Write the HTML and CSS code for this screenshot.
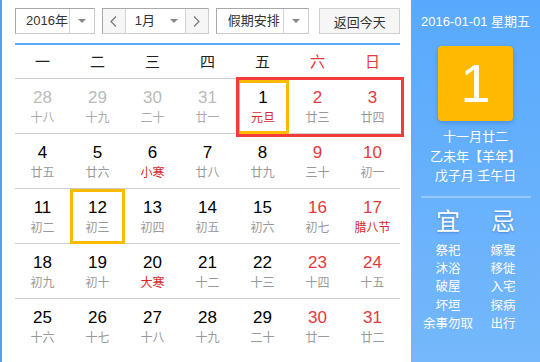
FILE: index.html
```html
<!DOCTYPE html>
<html lang="zh-CN">
<head>
  <meta charset="UTF-8">
  <meta name="viewport" content="width=device-width, initial-scale=1.0">
  <title>万年历</title>
  <link rel="stylesheet" href="styles.css">
</head>
<body>
  <div class="calendar">
    <div class="main">
      <div class="toolbar">
        <div class="select year">
          <span class="select-label">2016年</span>
          <span class="select-arrow"><i class="caret"></i></span>
        </div>
        <div class="month-group">
          <button class="nav">
            <svg width="7" height="11" viewBox="0 0 7 11"><polyline points="6,0.5 1,5.5 6,10.5" fill="none" stroke="#777" stroke-width="1.2"/></svg>
          </button>
          <div class="select month">
            <span class="select-label">1月</span>
            <span class="select-arrow"><i class="caret"></i></span>
          </div>
          <button class="nav">
            <svg width="7" height="11" viewBox="0 0 7 11"><polyline points="1,0.5 6,5.5 1,10.5" fill="none" stroke="#777" stroke-width="1.2"/></svg>
          </button>
        </div>
        <div class="select holiday">
          <span class="select-label">假期安排</span>
          <span class="select-arrow"><i class="caret"></i></span>
        </div>
        <button class="today-btn">返回今天</button>
      </div>

      <div class="week-head">
        <span>一</span><span>二</span><span>三</span><span>四</span><span>五</span>
        <span class="weekend">六</span><span class="weekend">日</span>
      </div>

      <div class="days">
        <!-- 标注框 -->
        <div class="mark"></div>

        <div class="day other"><b>28</b><em>十八</em></div>
        <div class="day other"><b>29</b><em>十九</em></div>
        <div class="day other"><b>30</b><em>二十</em></div>
        <div class="day other"><b>31</b><em>廿一</em></div>
        <div class="day today"><b>1</b><em class="fest">元旦</em></div>
        <div class="day weekend"><b>2</b><em>廿三</em></div>
        <div class="day weekend"><b>3</b><em>廿四</em></div>

        <div class="day"><b>4</b><em>廿五</em></div>
        <div class="day"><b>5</b><em>廿六</em></div>
        <div class="day"><b>6</b><em class="fest">小寒</em></div>
        <div class="day"><b>7</b><em>廿八</em></div>
        <div class="day"><b>8</b><em>廿九</em></div>
        <div class="day weekend"><b>9</b><em>三十</em></div>
        <div class="day weekend"><b>10</b><em>初一</em></div>

        <div class="day"><b>11</b><em>初二</em></div>
        <div class="day selected"><b>12</b><em>初三</em></div>
        <div class="day"><b>13</b><em>初四</em></div>
        <div class="day"><b>14</b><em>初五</em></div>
        <div class="day"><b>15</b><em>初六</em></div>
        <div class="day weekend"><b>16</b><em>初七</em></div>
        <div class="day weekend"><b>17</b><em class="fest">腊八节</em></div>

        <div class="day"><b>18</b><em>初九</em></div>
        <div class="day"><b>19</b><em>初十</em></div>
        <div class="day"><b>20</b><em class="fest">大寒</em></div>
        <div class="day"><b>21</b><em>十二</em></div>
        <div class="day"><b>22</b><em>十三</em></div>
        <div class="day weekend"><b>23</b><em>十四</em></div>
        <div class="day weekend"><b>24</b><em>十五</em></div>

        <div class="day last"><b>25</b><em>十六</em></div>
        <div class="day last"><b>26</b><em>十七</em></div>
        <div class="day last"><b>27</b><em>十八</em></div>
        <div class="day last"><b>28</b><em>十九</em></div>
        <div class="day last"><b>29</b><em>二十</em></div>
        <div class="day last weekend"><b>30</b><em>廿一</em></div>
        <div class="day last weekend"><b>31</b><em>廿二</em></div>
      </div>
    </div>

    <aside class="side">
      <div class="side-date">2016-01-01 星期五</div>
      <div class="side-day">1</div>
      <div class="side-lunar">
        <p>十一月廿二</p>
        <p>乙未年【羊年】</p>
        <p>戊子月 壬午日</p>
      </div>
      <div class="side-line"></div>
      <div class="yiji">
        <div class="yiji-col">
          <h2>宜</h2>
          <p>祭祀</p>
          <p>沐浴</p>
          <p>破屋</p>
          <p>坏垣</p>
          <p>余事勿取</p>
        </div>
        <div class="yiji-col">
          <h2>忌</h2>
          <p>嫁娶</p>
          <p>移徙</p>
          <p>入宅</p>
          <p>探病</p>
          <p>出行</p>
        </div>
      </div>
    </aside>
  </div>
</body>
</html>
```

FILE: styles.css
```css
* {
  box-sizing: border-box;
}

body {
  margin: 0;
  background: #fff;
  font-family: "Liberation Sans", Arial, "Noto Sans CJK SC", sans-serif;
  color: #333;
}

.calendar {
  display: flex;
  width: 540px;
  height: 362px;
  overflow: hidden;
}

.main {
  width: 411px;
  border-left: 2px solid #4f9ff5;
  padding: 8px 11px 0 13px;
}

/* toolbar */

.toolbar {
  display: flex;
  align-items: center;
  height: 37px;
  padding-bottom: 9px;
  border-bottom: 2px solid #5aabfc;
}

.select {
  display: flex;
  height: 26px;
  border: 1px solid #cdcdcd;
  border-top-color: #a8a8a8;
  border-left-color: #a8a8a8;
  background: #fff;
  font-size: 13px;
  line-height: 24px;
}

.select-label {
  flex: 1;
  padding-left: 10px;
  white-space: nowrap;
}

.select-arrow {
  display: flex;
  align-items: center;
  justify-content: center;
  width: 25px;
  border-left: 1px solid #d4d4d4;
}

.caret {
  width: 0;
  height: 0;
  border-left: 4px solid transparent;
  border-right: 4px solid transparent;
  border-top: 4px solid #888;
}

.year {
  width: 80px;
}

.month-group {
  display: flex;
  height: 26px;
  margin-left: 7px;
  border: 1px solid #cdcdcd;
  border-top-color: #a8a8a8;
  border-left-color: #a8a8a8;
}

.month-group .select {
  width: 61px;
  height: 24px;
  border: none;
  border-left: 1px solid #d4d4d4;
  border-right: 1px solid #d4d4d4;
}

.month-group .select-label {
  padding-left: 9px;
}

.month-group .select-arrow {
  border-left: none;
  width: 22px;
}

.nav {
  display: flex;
  align-items: center;
  justify-content: center;
  width: 22px;
  height: 24px;
  padding: 0;
  border: none;
  background: #f6f6f6;
}

.holiday {
  width: 94px;
  margin-left: 7px;
}

.holiday .select-label {
  padding-left: 11px;
}

.today-btn {
  width: 81px;
  height: 26px;
  margin-left: 10px;
  padding: 0;
  border: 1px solid #cfcfcf;
  background: #f6f6f6;
  font-family: inherit;
  font-size: 13px;
  color: #333;
}

/* week header */

.week-head {
  display: grid;
  grid-template-columns: repeat(7, 55px);
  height: 34px;
  border-bottom: 1px solid #cfcfcf;
  font-size: 15px;
  line-height: 33px;
  text-align: center;
  color: #222;
}

.week-head .weekend {
  color: #e4393c;
}

/* days */

.days {
  position: relative;
  display: grid;
  grid-template-columns: repeat(7, 55px);
  grid-auto-rows: 55px;
}

.day {
  display: flex;
  flex-direction: column;
  align-items: center;
  padding-top: 9px;
  border-bottom: 1px solid #cfcfcf;
}

.day.last {
  border-bottom: none;
}

.day b {
  font-size: 17px;
  font-weight: normal;
  line-height: 20px;
  color: #000;
}

.day em {
  font-style: normal;
  font-size: 12px;
  line-height: 20px;
  color: #999;
}

.day.weekend b {
  color: #e4393c;
}

.day.other b {
  color: #bbb;
}

.day.other em {
  color: #aaa;
}

.day em.fest {
  color: #d9262c;
}

.day.selected,
.day.today {
  padding-top: 6px;
  border: 3px solid #ffba00;
}

.day.today {
  margin: 1px 1px 0 2px;
  padding-top: 5px;
}

.mark {
  position: absolute;
  left: 221px;
  top: -2px;
  width: 168px;
  height: 60px;
  border: 3px solid #f23b3b;
  pointer-events: none;
}

/* side panel */

.side {
  width: 129px;
  height: 362px;
  background: linear-gradient(#58a9fd, #75b8fb);
  color: #fff;
  text-align: center;
}

.side-date {
  margin-top: 12px;
  font-size: 13px;
  line-height: 20px;
}

.side-day {
  width: 75px;
  height: 75px;
  margin: 14px auto 0;
  border-radius: 4px;
  background: #ffba00;
  box-shadow: 0 2px 4px rgba(0, 60, 140, 0.25);
  font-size: 54px;
  line-height: 75px;
}

.side-lunar {
  margin-top: 6px;
  font-size: 13px;
  line-height: 19.5px;
}

.side-lunar p {
  margin: 0;
}

.side-line {
  height: 2px;
  margin: 10px 9px 0 10px;
  background: rgba(255, 255, 255, 0.3);
}

.yiji {
  display: flex;
  justify-content: center;
  margin-top: 10px;
}

.yiji-col {
  width: 55px;
}

.yiji-col h2 {
  margin: 0 0 6px;
  font-size: 24px;
  font-weight: normal;
  line-height: 28px;
  text-shadow: 0 1px 2px rgba(0, 40, 120, 0.3);
}

.yiji-col p {
  margin: 0;
  font-size: 12.5px;
  line-height: 18.4px;
  white-space: nowrap;
}
```
